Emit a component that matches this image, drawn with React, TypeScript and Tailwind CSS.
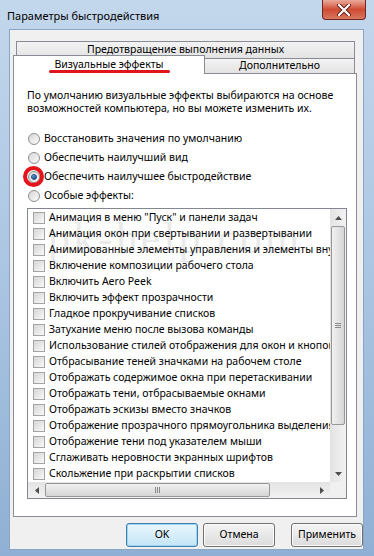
import React from "react";

const items = [
  "Анимация в меню \"Пуск\" и панели задач",
  "Анимация окон при свертывании и развертывании",
  "Анимированные элементы управления и элементы внутри окна",
  "Включение композиции рабочего стола",
  "Включить Aero Peek",
  "Включить эффект прозрачности",
  "Гладкое прокручивание списков",
  "Затухание меню после вызова команды",
  "Использование стилей отображения для окон и кнопок",
  "Отбрасывание теней значками на рабочем столе",
  "Отображать содержимое окна при перетаскивании",
  "Отображать тени, отбрасываемые окнами",
  "Отображать эскизы вместо значков",
  "Отображение прозрачного прямоугольника выделения",
  "Отображение тени под указателем мыши",
  "Сглаживать неровности экранных шрифтов",
  "Скольжение при раскрытии списков",
];

const radios = [
  "Восстановить значения по умолчанию",
  "Обеспечить наилучший вид",
  "Обеспечить наилучшее быстродействие",
  "Особые эффекты:",
];

const Radio = ({ checked }: { checked?: boolean }) => (
  <div className="w-[12px] h-[12px] rounded-full border border-[#8e8f8f] bg-gradient-to-br from-[#d8d8d8] to-[#fafafa] flex items-center justify-center shrink-0">
    {checked && (
      <div className="w-[6px] h-[6px] rounded-full bg-gradient-to-br from-[#7ab0e0] to-[#0f3f86] border border-[#1d4f8a]" />
    )}
  </div>
);

const Checkbox = () => (
  <div className="w-[12px] h-[12px] border border-[#a4a4a4] bg-gradient-to-br from-[#d6d6d6] to-[#f8f8f8] shrink-0" />
);

const Button = ({ label, primary }: { label: string; primary?: boolean }) => (
  <div
    className={
      "w-[73px] h-[24px] rounded-[3px] border flex items-center justify-center text-[10.5px] text-black bg-gradient-to-b " +
      (primary
        ? "border-[#3c7fb1] from-[#eaf6fd] to-[#c4e5f6] shadow-[inset_0_0_0_1px_#9ed5f1]"
        : "border-[#707070] from-[#f4f4f4] to-[#dcdcdc] shadow-[inset_0_0_0_1px_#fbfbfb]")
    }
  >
    {label}
  </div>
);

export default function App() {
  return (
    <div
      className="w-[374px] h-[556px] bg-gradient-to-b from-[#c3d7ec] via-[#aac5e2] to-[#8fb0d4] flex flex-col overflow-hidden"
      style={{ fontFamily: '"Noto Sans", "Open Sans", sans-serif' }}
    >
      {/* title bar */}
      <div className="h-[29px] flex items-start justify-between shrink-0">
        <div className="pl-[7px] pt-[8px] text-[11px] text-black">Параметры быстродействия</div>
        <div className="mr-[8px] w-[44px] h-[20px] rounded-b-[4px] border border-t-0 border-[#6d2a22] bg-gradient-to-b from-[#e9a99b] via-[#cf4a33] to-[#d9775f] flex items-center justify-center">
          <svg width="14" height="12" viewBox="0 0 14 12">
            <path d="M2 1 L12 11 M12 1 L2 11" stroke="#5a1d14" strokeWidth="4" strokeLinecap="round" />
            <path d="M2 1 L12 11 M12 1 L2 11" stroke="#ffffff" strokeWidth="2.2" strokeLinecap="round" />
          </svg>
        </div>
      </div>

      {/* client area */}
      <div className="ml-[9px] mr-[10px] mb-[6px] flex-1 bg-[#f0f0f0] border border-[#8ba5c4] flex flex-col relative">
        {/* tabs row 1 */}
        <div className="pt-[11px] pl-[6px]">
          <div className="w-[339px] h-[17px] border border-b-0 border-[#898c95] bg-gradient-to-b from-[#f3f3f3] to-[#e3e3e3] flex items-center justify-center text-[10.5px] text-black">
            Предотвращение выполнения данных
          </div>
        </div>
        {/* tabs row 2 */}
        <div className="relative z-10 -mt-[3px] pl-[3px] flex items-end h-[18px]">
          <div className="relative w-[192px] h-[19px] -mb-px border border-b-0 border-[#898c95] bg-white flex items-center justify-center text-[10.5px] text-black">
            Визуальные эффекты
            <div className="absolute left-[35px] top-[14px] w-[121px] h-[3px] rounded-full bg-[#e0141b]" />
          </div>
          <div className="w-[150px] h-[15px] border border-b-0 border-l-0 border-[#898c95] bg-gradient-to-b from-[#f3f3f3] to-[#e3e3e3] flex items-center justify-center text-[10.5px] text-black">
            Дополнительно
          </div>
        </div>

        {/* panel */}
        <div className="ml-[3px] w-[344px] h-[444px] border border-[#898c95] bg-white pl-[13px] pt-[15px] flex flex-col">
          <p className="text-[10.5px] leading-[13px] text-black w-[320px]">
            По умолчанию визуальные эффекты выбираются на основе возможностей компьютера, но вы можете изменить их.
          </p>
          <div className="mt-[14px] flex flex-col">
            {radios.map((r, i) => (
              <div key={r} className="h-[19px] flex items-center gap-[4px] pl-[1px] text-[10.5px] text-black relative">
                <Radio checked={i === 2} />
                <span>{r}</span>
                {i === 2 && (
                  <div className="absolute left-[-4px] top-[-1px] w-[21px] h-[21px] rounded-full border-[4px] border-[#e3141c]" />
                )}
              </div>
            ))}
          </div>

          {/* listbox */}
          <div className="mt-[3px] w-[320px] h-[291px] border border-[#828790] bg-white flex flex-col">
            <div className="flex flex-1 min-h-0">
              <div className="w-[302px] pt-px overflow-hidden flex flex-col">
                {items.map((t) => (
                  <div key={t} className="h-[16px] flex items-center gap-[4px] pl-[5px] whitespace-nowrap text-[10.5px] text-black">
                    <Checkbox />
                    <span>{t}</span>
                  </div>
                ))}
              </div>
              {/* vertical scrollbar */}
              <div className="w-[16px] bg-gradient-to-r from-[#e3e3e3] to-[#f2f2f2] flex flex-col items-center">
                <div className="h-[17px] w-full flex items-center justify-center">
                  <svg width="7" height="4" viewBox="0 0 7 4"><path d="M0 4 L3.5 0 L7 4 Z" fill="#4d4d4d" /></svg>
                </div>
                <div className="w-[14px] h-[199px] rounded-[2px] border border-[#979797] bg-gradient-to-r from-[#f1f1f1] to-[#d6d6d6] flex items-center justify-center">
                  <div className="flex flex-col gap-[1px]">
                    <div className="w-[6px] h-px bg-[#8a8a8a]" />
                    <div className="w-[6px] h-px bg-[#8a8a8a]" />
                    <div className="w-[6px] h-px bg-[#8a8a8a]" />
                  </div>
                </div>
                <div className="flex-1" />
                <div className="h-[17px] w-full flex items-center justify-center">
                  <svg width="7" height="4" viewBox="0 0 7 4"><path d="M0 0 L3.5 4 L7 0 Z" fill="#4d4d4d" /></svg>
                </div>
              </div>
            </div>
            {/* horizontal scrollbar */}
            <div className="h-[16px] flex">
              <div className="w-[302px] bg-gradient-to-b from-[#e3e3e3] to-[#f2f2f2] flex items-center">
                <div className="w-[17px] flex items-center justify-center">
                  <svg width="4" height="7" viewBox="0 0 4 7"><path d="M4 0 L0 3.5 L4 7 Z" fill="#4d4d4d" /></svg>
                </div>
                <div className="w-[225px] h-[14px] rounded-[2px] border border-[#979797] bg-gradient-to-b from-[#f1f1f1] to-[#d6d6d6] flex items-center justify-center">
                  <div className="flex gap-[1px]">
                    <div className="w-px h-[6px] bg-[#8a8a8a]" />
                    <div className="w-px h-[6px] bg-[#8a8a8a]" />
                    <div className="w-px h-[6px] bg-[#8a8a8a]" />
                  </div>
                </div>
                <div className="flex-1" />
                <div className="w-[17px] flex items-center justify-center">
                  <svg width="4" height="7" viewBox="0 0 4 7"><path d="M0 0 L4 3.5 L0 7 Z" fill="#4d4d4d" /></svg>
                </div>
              </div>
              <div className="w-[16px] bg-[#f0f0f0]" />
            </div>
          </div>
        </div>

        {/* buttons */}
        <div className="mt-[6px] flex pl-[116px] gap-[5px]">
          <Button label="OK" primary />
          <Button label="Отмена" />
          <div className="w-[6px]" />
          <Button label="Применить" />
        </div>

        {/* watermark */}
        <div
          className="absolute left-[38px] top-[176px] text-[44px] tracking-[3px] text-[#000000] opacity-[0.08] pointer-events-none whitespace-nowrap"
          style={{ fontFamily: '"Liberation Serif", serif' }}
        >
          pk-help.com
        </div>
      </div>
    </div>
  );
}
